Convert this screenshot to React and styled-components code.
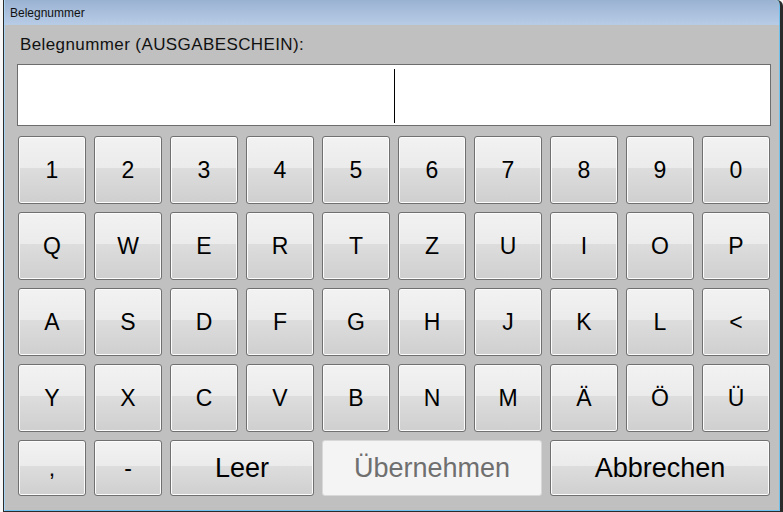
import React from 'react';
import styled, { createGlobalStyle } from 'styled-components';

const GlobalStyle = createGlobalStyle`
  html, body {
    margin: 0;
    padding: 0;
    background: #f7f7f7;
    overflow: hidden;
  }
  body {
    font-family: "Liberation Sans", Arial, sans-serif;
  }
`;

const keyRows = [
  ['1', '2', '3', '4', '5', '6', '7', '8', '9', '0'],
  ['Q', 'W', 'E', 'R', 'T', 'Z', 'U', 'I', 'O', 'P'],
  ['A', 'S', 'D', 'F', 'G', 'H', 'J', 'K', 'L', '<'],
  ['Y', 'X', 'C', 'V', 'B', 'N', 'M', 'Ä', 'Ö', 'Ü'],
];

const bottomRow = [
  { label: ',', span: 1 },
  { label: '-', span: 1 },
  { label: 'Leer', span: 2, big: true },
  { label: 'Übernehmen', span: 3, big: true, disabled: true },
  { label: 'Abbrechen', span: 3, big: true },
];

function App() {
  return (
    <>
      <GlobalStyle />
      <Desktop>
        <Window>
          <TitleBar>Belegnummer</TitleBar>
          <Content>
            <Label>Belegnummer (AUSGABESCHEIN):</Label>
            <Input>
              <Caret />
            </Input>
            <Keypad>
              {keyRows.flat().map((k, i) => (
                <Key key={i}>{k}</Key>
              ))}
              {bottomRow.map((k) => (
                <Key key={k.label} $span={k.span} $big={k.big} disabled={k.disabled}>
                  {k.label}
                </Key>
              ))}
            </Keypad>
          </Content>
        </Window>
      </Desktop>
    </>
  );
}

export default App;

const Desktop = styled.div`
  width: 783px;
  height: 512px;
  display: flex;
  padding-left: 3px;
  box-sizing: border-box;
`;

const Window = styled.div`
  flex: 1;
  display: flex;
  flex-direction: column;
  background: #c0c0c0;
  border: 1px solid #2b2b2b;
  border-top: none;
  border-right-width: 3px;
  border-top-right-radius: 6px;
  box-shadow: inset 1px 0 0 #a9d3f2, inset -1px 0 0 #6fc2ee, inset 0 -1px 0 #6fc2ee;
  box-sizing: border-box;
  overflow: hidden;
`;

const TitleBar = styled.div`
  height: 25px;
  flex: none;
  padding-left: 5px;
  margin-left: 1px;
  margin-right: 1px;
  display: flex;
  align-items: center;
  font-size: 12px;
  color: #111;
  background: linear-gradient(#9ab2d2, #b8cce6);
  border-top-right-radius: 5px;
`;

const Content = styled.div`
  flex: 1;
  display: flex;
  flex-direction: column;
  padding: 11px 9px 0 13px;
`;

const Label = styled.div`
  height: 18px;
  line-height: 18px;
  font-size: 17px;
  letter-spacing: 0.4px;
  color: #111;
  padding-left: 3px;
`;

const Input = styled.div`
  margin-top: 10px;
  height: 62px;
  box-sizing: border-box;
  background: #fff;
  border: 1px solid #6d6d6d;
  display: flex;
  justify-content: center;
  align-items: center;
`;

const Caret = styled.div`
  width: 1px;
  height: 54px;
  margin-top: 2px;
  background: #000;
`;

const Keypad = styled.div`
  margin-top: 10px;
  padding-left: 1px;
  display: grid;
  grid-template-columns: repeat(10, 68px);
  grid-template-rows: repeat(4, 68px) 56px;
  gap: 8px;
`;

const Key = styled.button`
  grid-column: span ${(p) => p.$span || 1};
  margin: 0;
  padding: 0;
  font-family: "Liberation Sans", Arial, sans-serif;
  font-size: ${(p) => (p.$big ? '27px' : '23px')};
  color: #000;
  border: 1px solid #707070;
  border-radius: 3px;
  background: linear-gradient(#f2f2f2 0%, #ebebeb 47%, #dddddd 47%, #cfcfcf 100%);
  box-shadow: inset 0 0 0 1px #fcfcfc;
  display: flex;
  align-items: center;
  justify-content: center;

  &:disabled {
    color: #6f6f6f;
    background: #f4f4f4;
    border-color: #d8d8d8;
    box-shadow: none;
  }
`;
